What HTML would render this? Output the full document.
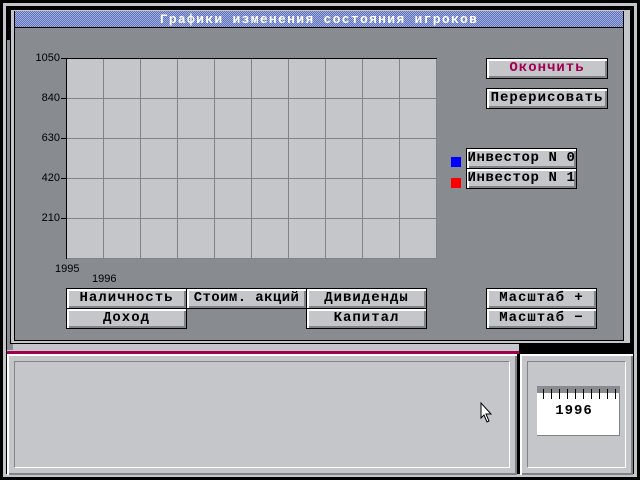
<!DOCTYPE html>
<html><head><meta charset="utf-8"><style>
*{margin:0;padding:0;box-sizing:border-box}
body{width:640px;height:480px;background:#000;position:relative;overflow:hidden;font-family:"Liberation Mono","DejaVu Sans Mono",monospace;}
.a{position:absolute}
.btn{position:absolute;background:#c4c6ca;border:1px solid #000;box-shadow:inset 2px 2px 0 #fff,inset -2px -2px 0 #808488;font-weight:bold;font-size:14px;text-align:center;line-height:18px;color:#000;letter-spacing:1px;white-space:nowrap}
.lbl{position:absolute;font-family:"Liberation Sans Narrow","Liberation Sans",sans-serif;font-size:11px;color:#000;text-align:right;width:40px}
</style></head><body>
<div class="a" style="left:3px;top:3px;width:634px;height:474px;background:#c4c6ca"></div>
<div class="a" style="left:6px;top:6px;width:628px;height:468px;background:#000"></div>
<div class="a" style="left:7px;top:344px;width:512px;height:10px;background:#c4c6ca;border-bottom:3px solid #a00050"></div>
<div class="a" style="left:7px;top:40px;width:6px;height:310px;background:#888c90"></div>
<div class="a" style="left:7px;top:354px;width:510px;height:121px;background:#c4c6ca;box-shadow:inset 2px 2px 0 #fff,inset -2px -2px 0 #808488"></div>
<div class="a" style="left:14px;top:361px;width:496px;height:107px;border-top:1px solid #808488;border-left:1px solid #808488;border-bottom:1px solid #fff;border-right:1px solid #fff"></div>
<div class="a" style="left:520px;top:354px;width:113px;height:121px;background:#c4c6ca;box-shadow:inset 2px 2px 0 #fff,inset -2px -2px 0 #808488"></div>
<div class="a" style="left:527px;top:361px;width:99px;height:107px;border-top:1px solid #808488;border-left:1px solid #808488;border-bottom:1px solid #fff;border-right:1px solid #fff"></div>
<div class="a" style="left:537px;top:386px;width:83px;height:50px;background:#fff;border-right:1px solid #808488;border-bottom:1px solid #808488"></div>
<div class="a" style="left:537px;top:386px;width:83px;height:7px;background:#888c90"></div>
<div class="a" style="left:543px;top:389px;width:75px;height:10px;background:repeating-linear-gradient(90deg,#000 0 1px,transparent 1px 8px)"></div>
<div class="a" style="left:537px;top:403px;width:74px;text-align:center;font-weight:bold;font-size:14px;letter-spacing:1px">1996</div>
<svg class="a" style="left:480px;top:402px" width="14" height="22"><path d="M1 1V16L4 13L7 20L9 19L6 12H11Z" fill="#fff" stroke="#000"/></svg>
<div class="a" style="left:10px;top:9px;width:621px;height:335px;background:#c4c6ca;border:1px solid #000"></div>
<div class="a" style="left:14px;top:11px;width:610px;height:330px;background:#888c90;border:1px solid #000"></div>
<div class="a" style="left:15px;top:11px;width:608px;height:17px;background-image:repeating-conic-gradient(#6070b8 0 25%,#a0b0e0 0 50%);background-size:2px 2px;border-bottom:1px solid #000;color:#fff;font-weight:bold;font-size:13px;text-align:center;line-height:17px;letter-spacing:1.3px">Графики изменения состояния игроков</div>
<div class="a" style="left:66px;top:58px;width:371px;height:201px;background:#c4c6ca;border-top:1px solid #000;border-left:1px solid #000;background-image:linear-gradient(90deg,#808488 1px,transparent 1px),linear-gradient(#808488 1px,transparent 1px);background-size:37px 40px;background-position:36px 39px"></div>
<div class="lbl" style="left:20px;top:52px">1050</div>
<div class="lbl" style="left:20px;top:92px">840</div>
<div class="lbl" style="left:20px;top:132px">630</div>
<div class="lbl" style="left:20px;top:172px">420</div>
<div class="lbl" style="left:20px;top:212px">210</div>
<div class="a" style="left:61px;top:58px;width:5px;height:1px;background:#000;box-shadow:0 40px #000,0 80px #000,0 120px #000,0 160px #000"></div>
<div class="lbl" style="left:55px;top:263px;text-align:left">1995</div>
<div class="lbl" style="left:92px;top:273px;text-align:left">1996</div>
<div class="btn" style="left:486px;top:58px;width:122px;height:21px;color:#a00050">Окончить</div>
<div class="btn" style="left:486px;top:88px;width:122px;height:21px">Перерисовать</div>
<div class="a" style="left:451px;top:157px;width:10px;height:10px;background:#00f"></div>
<div class="a" style="left:451px;top:178px;width:10px;height:10px;background:#f00"></div>
<div class="btn" style="left:466px;top:148px;width:111px;height:21px;letter-spacing:0.6px">Инвестор N 0</div>
<div class="btn" style="left:466px;top:168px;width:111px;height:21px;letter-spacing:0.6px">Инвестор N 1</div>
<div class="btn" style="left:66px;top:288px;width:121px;height:21px">Наличность</div>
<div class="btn" style="left:186px;top:288px;width:121px;height:21px;letter-spacing:0.4px">Стоим. акций</div>
<div class="btn" style="left:306px;top:288px;width:121px;height:21px">Дивиденды</div>
<div class="btn" style="left:66px;top:308px;width:121px;height:21px">Доход</div>
<div class="btn" style="left:306px;top:308px;width:121px;height:21px">Капитал</div>
<div class="btn" style="left:486px;top:288px;width:111px;height:21px">Масштаб +</div>
<div class="btn" style="left:486px;top:308px;width:111px;height:21px">Масштаб −</div>
</body></html>
